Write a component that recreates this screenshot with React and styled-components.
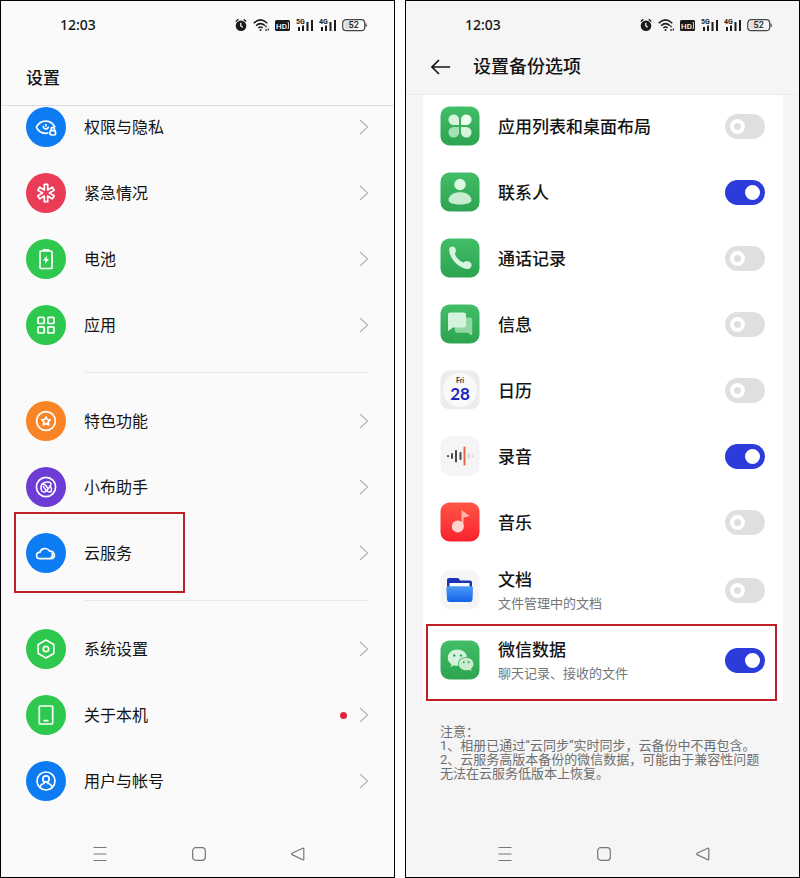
import React, { useState } from "react";
import styled, { createGlobalStyle } from "styled-components";

const GlobalStyle = createGlobalStyle`
    *,
    *::before {
        box-sizing: border-box;
    }

    body {
        margin: 0;
        background: #fff;
        color: #141414;
        font-family: Roboto, "Noto Sans CJK SC", sans-serif;
    }
`;

const Screens = styled.main`
    display: grid;
    grid-template-columns: 1fr 1fr;
    gap: 10px;
    min-height: 100vh;
`;

const Phone = styled.section`
    display: flex;
    flex-direction: column;
    min-width: 0;
    border: 1px solid #000;
    background: ${(props) => props.$bg};
`;

const StatusBar = styled.div`
    display: flex;
    align-items: center;
    justify-content: space-between;
    height: 48px;
    padding: 0 27px 0 59px;
    font-family: "Noto Sans", sans-serif;
    font-size: 14px;
    font-weight: 500;
    line-height: 20px;
`;

const StatusIcons = styled.div`
    display: flex;
    align-items: center;
    gap: 6px;

    svg {
        display: block;
    }
`;

const Header = styled.header`
    display: flex;
    align-items: center;
    gap: 22px;
    height: ${(props) => (props.$tall ? "57px" : "46px")};
    padding: ${(props) => (props.$tall ? "2px 25px 0" : "0 25px 10px")};
    border-bottom: 1px solid ${(props) => (props.$tall ? "#dedede" : "#ececec")};
`;

const Title = styled.h1`
    margin: 0;
    font-size: ${(props) => props.$size || "17px"};
    font-weight: 500;
    line-height: 24px;
`;

const BackButton = styled.button`
    display: flex;
    padding: 0;
    border: 0;
    background: none;
    color: #141414;
    cursor: pointer;
`;

const SettingsList = styled.nav`
    padding: 1px 25px 24px;
`;

const Group = styled.ul`
    display: flex;
    flex-direction: column;
    gap: 26px;
    margin: 0;
    padding: 0;
    list-style: none;
`;

const Divider = styled.hr`
    height: 1px;
    margin: 27px 0 28px 58px;
    border: 0;
    background: #e9e9e9;
`;

const SettingLink = styled.a`
    position: relative;
    display: flex;
    align-items: center;
    gap: 12px;
    height: 40px;
    color: inherit;
    font-size: 16px;
    line-height: 24px;
    text-decoration: none;
`;

const SettingLabel = styled.span`
    flex: 1;
    padding: 2px 0 0 6px;
`;

const Round = styled.span`
    display: grid;
    place-items: center;
    width: 40px;
    height: 40px;
    border-radius: 50%;
    background: ${(props) => props.$color};
`;

const Dot = styled.span`
    width: 7px;
    height: 7px;
    border-radius: 50%;
    background: #e0223c;
`;

const Mark = styled.span`
    position: absolute;
    top: ${(props) => props.$top};
    right: ${(props) => props.$right};
    bottom: ${(props) => props.$bottom};
    left: ${(props) => props.$left};
    width: ${(props) => props.$width};
    border: 2px solid #c02025;
    pointer-events: none;
`;

const Card = styled.ul`
    display: flex;
    flex-direction: column;
    gap: 26px;
    margin: 0 16px 0 17px;
    padding: 11px 18px 21px 17px;
    background: #fff;
    list-style: none;
`;

const BackupRow = styled.label`
    position: relative;
    display: flex;
    align-items: center;
    gap: 18px;
    height: ${(props) => (props.$double ? "44px" : "40px")};
    cursor: pointer;

    svg {
        display: block;
    }
`;

const BackupText = styled.span`
    display: flex;
    flex: 1;
    flex-direction: column;
    gap: 2px;
    padding-top: 2px;
    font-size: 17px;
    font-weight: 500;
    line-height: 24px;
`;

const SubText = styled.span`
    color: #757575;
    font-size: 13px;
    font-weight: 400;
    line-height: 20px;
`;

const Toggle = styled.input`
    display: flex;
    width: 40px;
    height: 25px;
    margin: 0;
    padding: 5px;
    border-radius: 13px;
    appearance: none;
    background: #dfdfdf;
    cursor: pointer;

    &::before {
        content: "";
        width: 15px;
        height: 15px;
        border: 4px solid #fff;
        border-radius: 50%;
    }

    &:checked {
        justify-content: flex-end;
        background: #2b3cdb;
    }

    &:checked::before {
        background: #fff;
    }
`;

const Notes = styled.div`
    padding: 22px 28px 0 34px;
    color: #6e6e6e;
    font-size: 13px;
    line-height: 14px;

    p {
        margin: 0;
    }
`;

const NavBar = styled.footer`
    display: flex;
    align-items: center;
    justify-content: center;
    gap: 83px;
    height: 46px;
    margin-top: auto;
    padding-left: 2px;
`;

const NavButton = styled.button`
    display: flex;
    padding: 0;
    border: 0;
    background: none;
    cursor: pointer;
`;

const Line = ({ children }) => (
    <svg
        width="24"
        height="24"
        viewBox="0 0 24 24"
        fill="none"
        stroke="#fff"
        strokeWidth="1.7"
        strokeLinejoin="round"
        strokeLinecap="round"
        aria-hidden="true"
    >
        {children}
    </svg>
);

const glyphs = {
    privacy: (
        <Line>
            <path d="M13.800 18Q12.800 18.300 11.400 18.300C6.800 18.300 3.600 15 2.400 12.200C4.200 8.800 7.300 6.200 11.600 6.200C16 6.200 19 8.700 20.700 11.600" />
            <path d="M9.300 11.300A2.600 2.600 0 0 0 14.300 12.300M11.900 9.500V10.800" />
            <rect x="16" y="15.700" width="5.600" height="4.300" rx="1.600" />
            <path d="M17.200 15.300V13.900A1.600 1.600 0 0 1 20.400 13.900V15.300" />
        </Line>
    ),
    emergency: (
        <Line>
            <path d="M10.300 3.300H13.700V9L18.300 6.100L20.200 9.300L15.400 12L20.200 14.700L18.300 17.900L13.700 15V20.700H10.300V15L5.700 17.900L3.800 14.700L8.600 12L3.800 9.300L5.700 6.100L10.300 9Z" />
        </Line>
    ),
    battery: (
        <Line>
            <rect x="6" y="4" width="12" height="17.500" rx="1" />
            <path d="M9.500 2.800H14.500" />
            <path fill="#fff" stroke="none" d="M13 8.500L9 13.500H11.500L11 17L15 12H12.500Z" />
        </Line>
    ),
    apps: (
        <Line>
            <rect x="4" y="4.300" width="6.200" height="6.200" rx="1" />
            <rect x="13.800" y="4.300" width="6.200" height="6.200" rx="1" />
            <rect x="4" y="13.800" width="6.200" height="6.200" rx="1" />
            <rect x="13.800" y="13.800" width="6.200" height="6.200" rx="1" />
        </Line>
    ),
    star: (
        <Line>
            <circle cx="12" cy="12" r="9.400" />
            <path d="M12 7.800L13.300 10.500L16.200 10.900L14.100 13L14.600 16L12 14.600L9.400 16L9.900 13L7.800 10.900L10.700 10.500Z" />
        </Line>
    ),
    assistant: (
        <Line>
            <circle cx="12" cy="12" r="9.600" />
            <path
                strokeWidth="1.500"
                d="M7.200 13.200C6.300 9.500 9.500 6.700 14.500 7C17.500 7.200 17.500 9.800 16 11.200C18 13 18 16.600 16 17C13.800 17.200 10.800 14.500 9.500 11.500"
            />
            <path strokeWidth="1.500" d="M7.200 13.200C6.800 16 8.500 17.400 11 16.700C12.800 16 14.600 13.600 16 11.200M8.500 8.800C10.500 9 12.500 11 13.500 13" />
        </Line>
    ),
    cloud: (
        <Line>
            <path d="M6.300 17.700C1.500 17.700 1.300 11.800 6 11.200C7 7.300 12.700 5.800 15.800 10.200C20.500 10 22.900 17.700 16.700 17.700Z" />
            <path d="M18.200 12.300C19.200 14 18.300 15.600 17 16.900" />
        </Line>
    ),
    system: (
        <Line>
            <path d="M12 3L19.800 7.400V16.600L12 21L4.200 16.600V7.400Z" />
            <circle cx="12" cy="12" r="2.700" />
        </Line>
    ),
    phone: (
        <Line>
            <rect x="5.300" y="3" width="13.400" height="18" rx="1" />
            <path d="M10.300 17.700H13.700" />
        </Line>
    ),
    user: (
        <Line>
            <circle cx="12" cy="12" r="9" />
            <circle cx="12" cy="10" r="3.200" />
            <path d="M6 18.500C6.500 15.500 8.500 14.600 10.200 14.500L9.900 12.800M18 18.500C17.500 15.500 15.500 14.600 13.800 14.500L14.100 12.800" />
        </Line>
    ),
};

const Tile = ({ fill, children }) => (
    <svg width="40" height="40" viewBox="0 0 40 40" aria-hidden="true">
        <defs>
            <linearGradient id="green" x1="0" y1="0" x2="0" y2="1">
                <stop offset="0" stopColor="#42bd68" />
                <stop offset="1" stopColor="#2da44f" />
            </linearGradient>
            <linearGradient id="red" x1="0" y1="0" x2="0" y2="1">
                <stop offset="0" stopColor="#ff5646" />
                <stop offset="1" stopColor="#f8222f" />
            </linearGradient>
            <linearGradient id="folder" x1="0" y1="0" x2="0" y2="1">
                <stop offset="0" stopColor="#4c9af6" />
                <stop offset="1" stopColor="#1464e8" />
            </linearGradient>
        </defs>
        <rect x="0.500" y="0.500" width="39" height="39" rx="9" fill={fill} />
        {children}
    </svg>
);

const tiles = {
    layout: (
        <Tile fill="url(#green)">
            <path fill="#d5f5dd" d="M19 19V13.300A5.300 5.300 0 1 0 13.700 19Z" />
            <path fill="#effff2" d="M21 19V13.300A5.300 5.300 0 1 1 26.300 19Z" />
            <path fill="#a5dfb5" d="M19 21V26.700A5.300 5.300 0 1 1 13.700 21Z" />
            <path fill="#d5f5dd" d="M21 21V26.700A5.300 5.300 0 1 0 26.300 21Z" />
        </Tile>
    ),
    contacts: (
        <Tile fill="url(#green)">
            <circle cx="20" cy="12.500" r="5.700" fill="#dcf7e2" />
            <path fill="#c6edcf" d="M8.500 28C9 17.500 31 17.500 31.500 28C32 34 8 34 8.500 28Z" />
        </Tile>
    ),
    calls: (
        <Tile fill="url(#green)">
            <path
                fill="#d9f5df"
                d="M9.300 10.500C9.800 8.500 13 7.800 14.600 9.300C16.300 11 16.300 14 14.800 15.800C16 19.500 19.200 23 23.300 24.600C25 23 28.500 22.700 30.500 24.500C32.500 26.500 31.500 30.300 28.600 31C19.500 31.300 8.300 20 9.300 10.500Z"
            />
        </Tile>
    ),
    messages: (
        <Tile fill="url(#green)">
            <path fill="#90d7a3" d="M17 13.500H30Q32.200 13.500 32.200 15.700V31.500L27.500 28.700H17Q14.800 28.700 14.800 26.500V15.700Q14.800 13.500 17 13.500Z" />
            <path fill="#d5f3dc" d="M10 8.500H23.500Q26 8.500 26 11V21Q26 23.500 23.500 23.500H13L8 27V10.500Q8 8.500 10 8.500Z" />
        </Tile>
    ),
    calendar: (
        <Tile fill="#ececec">
            <circle cx="20" cy="20" r="17" fill="#f9f9f9" />
            <text x="20" y="13" fill="#333" fontFamily="Lato" fontSize="7" fontWeight="700" textAnchor="middle">
                Fri
            </text>
            <text x="20" y="30" fill="#1b25bd" fontFamily="Lato" fontSize="17" fontWeight="700" textAnchor="middle">
                28
            </text>
        </Tile>
    ),
    recorder: (
        <Tile fill="#f5f5f6">
            <g fill="none" strokeLinecap="round" strokeWidth="2" stroke="#47484d">
                <path d="M8 20V20.200M12 18V22M16 15V25.500M20.500 17V23" />
                <path stroke="#e26a43" d="M24.500 11.500V28.500" />
                <path stroke="#d6d2d0" d="M28.800 18V22M32.500 20V20.200" />
            </g>
        </Tile>
    ),
    music: (
        <Tile fill="url(#red)">
            <path fill="#ffb4ac" d="M21.500 8L29.500 14Q26 15.500 23.500 15V25H21.500Z" />
            <circle cx="17.800" cy="24.500" r="6" fill="#ffd4cf" />
        </Tile>
    ),
    documents: (
        <Tile fill="#f5f5f6">
            <path fill="#1934b4" d="M9 8H17.500Q19 8 19.500 9.500L20 10.500H30Q32 10.500 32 12.500V18H7V10Q7 8 9 8Z" />
            <path fill="#fff" d="M9.500 13H29.500V17H9.500Z" />
            <path fill="url(#folder)" d="M8 16.200H31.500Q33.200 16.200 33 18L32.500 29.500Q32.300 32 30 32H9.500Q7.300 32 7 29.500L6.300 18Q6.200 16.200 8 16.200Z" />
        </Tile>
    ),
    wechat: (
        <Tile fill="url(#green)">
            <path
                fill="#d5f3dc"
                d="M17.500 9.500C12 9.500 7.800 13 7.800 17.700C7.800 20.500 9.200 22.700 11.500 24.200L10.700 27L14 25.300Q15.800 25.900 18.300 25.800C17 20 21.500 16.500 27 16.700C26.200 12.500 22.300 9.500 17.500 9.500Z"
            />
            <path
                fill="#c7eccf"
                d="M26.200 17.700C22 17.700 18.700 20.400 18.700 24C18.700 27.700 22 30.300 26 30.300Q27.800 30.300 29.200 29.700L31.700 31L31 28.500C32.700 27.300 33.500 25.800 33.500 24C33.500 20.400 30.300 17.700 26.200 17.700Z"
            />
            <g fill="#36a457">
                <circle cx="14.300" cy="15.500" r="1.200" />
                <circle cx="21" cy="15.500" r="1.200" />
                <circle cx="23.700" cy="22.300" r="1" />
                <circle cx="28.700" cy="22.300" r="1" />
            </g>
        </Tile>
    ),
};

const settingGroups = [
    [
        { icon: "privacy", title: "权限与隐私", color: "#0d7cf2" },
        { icon: "emergency", title: "紧急情况", color: "#ea3b57" },
        { icon: "battery", title: "电池", color: "#2dc84d" },
        { icon: "apps", title: "应用", color: "#2dc84d" },
    ],
    [
        { icon: "star", title: "特色功能", color: "#f98426" },
        { icon: "assistant", title: "小布助手", color: "#6d3cd5" },
        { icon: "cloud", title: "云服务", color: "#0d7cf2", marked: true },
    ],
    [
        { icon: "system", title: "系统设置", color: "#2dc84d" },
        { icon: "phone", title: "关于本机", color: "#2dc84d", dot: true },
        { icon: "user", title: "用户与帐号", color: "#0d7cf2" },
    ],
];

const backupItems = [
    { icon: "layout", title: "应用列表和桌面布局" },
    { icon: "contacts", title: "联系人", on: true },
    { icon: "calls", title: "通话记录" },
    { icon: "messages", title: "信息" },
    { icon: "calendar", title: "日历" },
    { icon: "recorder", title: "录音", on: true },
    { icon: "music", title: "音乐" },
    { icon: "documents", title: "文档", sub: "文件管理中的文档" },
    { icon: "wechat", title: "微信数据", sub: "聊天记录、接收的文件", on: true, marked: true },
];

const Signal = ({ name }) => (
    <svg width="17" height="14" viewBox="0 0 17 14" fill="#1b1b1b">
        <text x="0" y="6" fontFamily="Roboto" fontSize="7" fontWeight="700">
            {name}
        </text>
        <path d="M2 9H4V13H2ZM6 7.500H8V13H6ZM10.500 4H12.500V13H10.500ZM15 2H17V13H15Z" />
    </svg>
);

const Status = () => (
    <StatusBar>
        <time>12:03</time>
        <StatusIcons>
            <svg width="12" height="14" viewBox="0 0 12 14" fill="none" stroke="#1b1b1b">
                <circle cx="6" cy="7.700" r="5.300" fill="#1b1b1b" stroke="none" />
                <path d="M0.800 3.600L3.300 1.300M11.200 3.600L8.700 1.300" strokeWidth="1.300" />
                <path d="M5.800 4.800V8L7.800 9.300" stroke="#fff" strokeWidth="1.200" />
            </svg>
            <svg width="16" height="14" viewBox="0 0 16 14" fill="none" stroke="#1b1b1b" strokeWidth="1.500">
                <path d="M0.700 5.200Q7.500 -1.500 14.300 5.200M3 7.700Q7.500 3.500 12 7.700M5.300 10Q7.500 8 9.700 10" />
                <circle cx="7.500" cy="12" r="1" fill="#1b1b1b" stroke="none" />
                <path d="M13 7.500V9.500M13 11V13M15.300 10.500V12.500" strokeWidth="1.200" />
            </svg>
            <svg width="15" height="14" viewBox="0 0 15 14">
                <rect y="2" width="15" height="11" rx="1.500" fill="#1b1b1b" />
                <text x="1" y="10.500" fill="#fff" fontFamily="Roboto" fontSize="8" fontWeight="500">
                    HD
                </text>
                <path d="M12.500 4.500H13.500V10.500H12.500" fill="none" stroke="#fff" strokeWidth="0.800" />
            </svg>
            <Signal name="5G" />
            <Signal name="4G" />
            <svg width="25" height="14" viewBox="0 0 25 14">
                <rect x="0.700" y="1.700" width="22" height="11" rx="3.500" fill="none" stroke="#444" strokeWidth="1.200" />
                <path d="M4 3.200H12V11.200H4Q2.300 11.200 2.300 9V5.500Q2.300 3.200 4 3.200Z" fill="#dedede" />
                <path d="M23.500 5V9.500Q24.800 9 24.800 7.200Q24.800 5.500 23.500 5Z" fill="#444" />
                <text x="11.700" y="10.300" fill="#222" fontFamily="Roboto" fontSize="9" fontWeight="500" textAnchor="middle">
                    52
                </text>
            </svg>
        </StatusIcons>
    </StatusBar>
);

const BottomNav = () => (
    <NavBar>
        <NavButton aria-label="菜单">
            <svg width="16" height="16" viewBox="0 0 16 16" stroke="#777" strokeWidth="1.200">
                <path d="M1.500 1.500H14.500M1.500 8H14.500M1.500 14.500H14.500" />
            </svg>
        </NavButton>
        <NavButton aria-label="主页">
            <svg width="16" height="16" viewBox="0 0 16 16" fill="none" stroke="#777" strokeWidth="1.200">
                <rect x="1.700" y="1.700" width="12.600" height="12.600" rx="3" />
            </svg>
        </NavButton>
        <NavButton aria-label="返回">
            <svg width="16" height="16" viewBox="0 0 16 16" fill="none" stroke="#777" strokeWidth="1.200" strokeLinejoin="round">
                <path d="M2 7.300Q1.300 8 2 8.600L12.800 13.800Q13.800 14.200 13.800 13V3Q13.800 1.800 12.800 2.200Z" />
            </svg>
        </NavButton>
    </NavBar>
);

const Settings = () => (
    <Phone $bg="#fafafa">
        <Status />
        <Header $tall>
            <Title>设置</Title>
        </Header>
        <SettingsList>
            {settingGroups.map((group, index) => (
                <React.Fragment key={index}>
                    {index > 0 && <Divider />}
                    <Group>
                        {group.map((item) => (
                            <li key={item.title}>
                                <SettingLink href="#">
                                    <Round $color={item.color}>{glyphs[item.icon]}</Round>
                                    <SettingLabel>{item.title}</SettingLabel>
                                    {item.dot && <Dot />}
                                    <svg width="10" height="16" viewBox="0 0 10 16" fill="none" stroke="#b5b5b5" strokeWidth="1.200">
                                        <path d="M1 1L8.600 8L1 15" />
                                    </svg>
                                    {item.marked && <Mark $top="-21px" $bottom="-20px" $left="-12px" $width="171px" />}
                                </SettingLink>
                            </li>
                        ))}
                    </Group>
                </React.Fragment>
            ))}
        </SettingsList>
        <BottomNav />
    </Phone>
);

const BackupOptions = () => {
    const [enabled, setEnabled] = useState(backupItems.map((item) => Boolean(item.on)));

    const toggle = (index) => setEnabled(enabled.map((on, i) => (i === index ? !on : on)));

    return (
        <Phone $bg="#f5f5f5">
            <Status />
            <Header>
                <BackButton aria-label="返回">
                    <svg width="20" height="16" viewBox="0 0 20 16" fill="none" stroke="currentColor" strokeWidth="1.600">
                        <path d="M19 8H1.500M8 1L1 8L8 15" />
                    </svg>
                </BackButton>
                <Title $size="18px">设置备份选项</Title>
            </Header>
            <Card>
                {backupItems.map((item, index) => (
                    <li key={item.title}>
                        <BackupRow $double={item.sub}>
                            {tiles[item.icon]}
                            <BackupText>
                                {item.title}
                                {item.sub && <SubText>{item.sub}</SubText>}
                            </BackupText>
                            <Toggle type="checkbox" role="switch" checked={enabled[index]} onChange={() => toggle(index)} />
                            {item.marked && <Mark $top="-14px" $right="-12px" $bottom="-19px" $left="-14px" />}
                        </BackupRow>
                    </li>
                ))}
            </Card>
            <Notes>
                <p>注意：</p>
                <p>1、相册已通过“云同步”实时同步，云备份中不再包含。</p>
                <p>2、云服务高版本备份的微信数据，可能由于兼容性问题无法在云服务低版本上恢复。</p>
            </Notes>
            <BottomNav />
        </Phone>
    );
};

const App = () => (
    <>
        <GlobalStyle />
        <Screens>
            <Settings />
            <BackupOptions />
        </Screens>
    </>
);

export default App;
